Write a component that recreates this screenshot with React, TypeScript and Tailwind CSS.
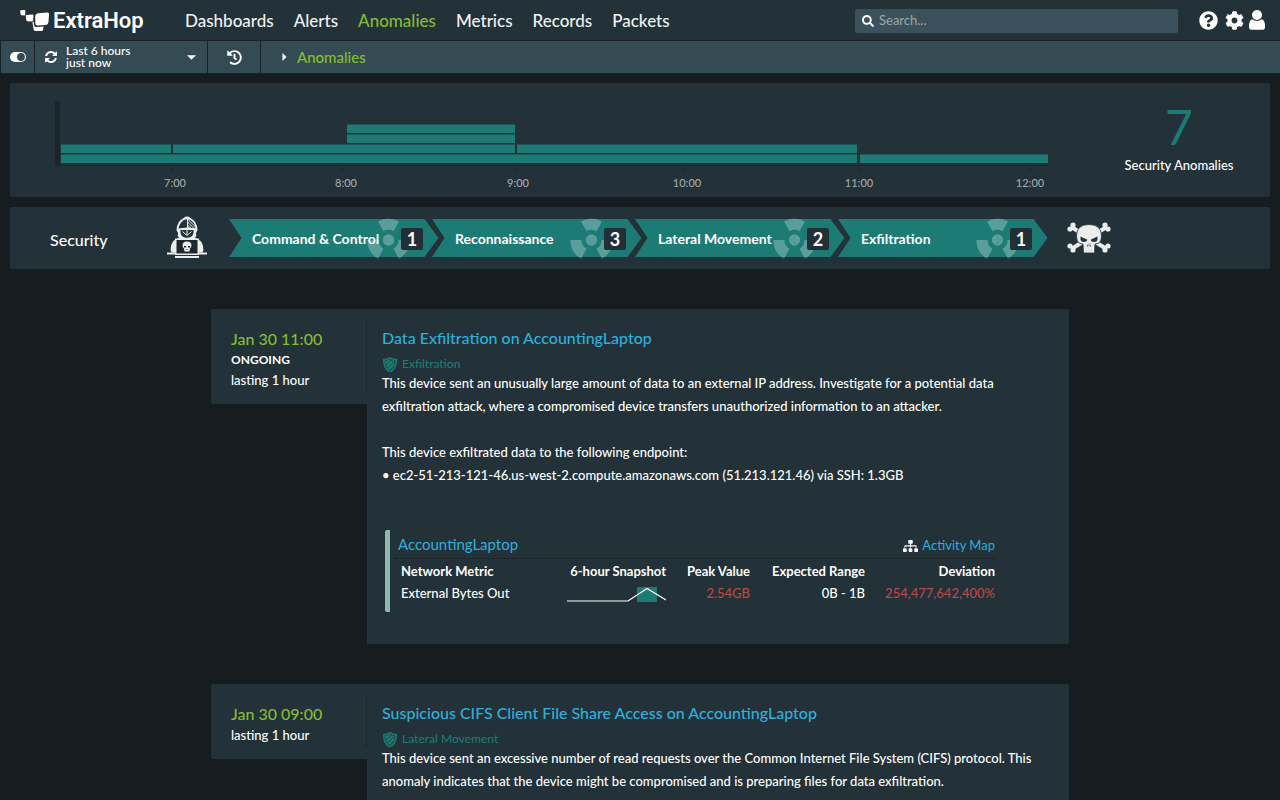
import React from 'react';
import { FaCog, FaHistory, FaQuestionCircle, FaSearch, FaSitemap } from 'react-icons/fa';

const navItems = ['Dashboards', 'Alerts', 'Anomalies', 'Metrics', 'Records', 'Packets'];

const bars = [
  { x: 337, y: 41, w: 168 },
  { x: 337, y: 51, w: 168 },
  { x: 51, y: 61, w: 110 },
  { x: 163, y: 61, w: 342 },
  { x: 507, y: 61, w: 340 },
  { x: 51, y: 71, w: 796 },
  { x: 850, y: 71, w: 188 },
];

const ticks = [
  { x: 162, label: '7:00', lx: 165 },
  { x: 332, label: '8:00', lx: 336 },
  { x: 505, label: '9:00', lx: 508 },
  { x: 675, label: '10:00', lx: 677 },
  { x: 849, label: '11:00', lx: 849 },
  { x: 1020, label: '12:00', lx: 1020 },
];

const phases = [
  { name: 'Command & Control', count: 1 },
  { name: 'Reconnaissance', count: 3 },
  { name: 'Lateral Movement', count: 2 },
  { name: 'Exfiltration', count: 1 },
];

const Logo = () => (
  <a href="/" className="flex items-center w-[165px] shrink-0 text-white">
    <svg className="w-[30px] h-6 mr-[3px]" viewBox="0 0 30 24" fill="currentColor">
      <path d="M.8 2.300 4.500 2q.8 0 .8.800L5.200 6.800q-.1.700-.8.700L1.500 7.200Q.8 7.100.7 6.400L.1 3.100q0-.7.700-.8z" />
      <path d="M6.500 7 12.500 6.600q1-.1 1 .9L13.100 12.600q-.1 1-1.100 1L7.500 13.200q-1-.1-1.100-1L5.700 8q-.1-.9.800-1z" />
      <path d="M18 5.300 27.500 4.500q1.700 0 1.600 1.500L28.400 14.500q-.4 2.300-2.600 2.500L17.300 17.400q-1.900 0-2-1.900l-.1-7.200q.2-2.700 2.800-3z" />
      <path d="M13.900 13.800v3q.2 2.200 2.400 2.200l7.300-.4-.6 3.400q-.2 1-1.300 1l-6.500-.1q-1.300-.1-1.600-1.300l-1.100-6.800q0-.9 1.400-1z" />
    </svg>
    <span className="font-['Roboto',sans-serif] font-semibold text-[22px] leading-6 pt-[2px]">ExtraHop</span>
  </a>
);

const Header = () => (
  <header className="h-10 shrink-0 flex items-center bg-[#233138] pl-5 pr-[15px]">
    <Logo />
    <nav className="flex gap-5 pt-[2px] text-[17px] leading-6 font-medium text-[#f0f3f4]">
      {navItems.map((item) => (
        <a key={item} href={'#' + item} className={item === 'Anomalies' ? 'text-[#84bc34]' : 'hover:text-white'}>
          {item}
        </a>
      ))}
    </nav>
    <label className="ml-auto mt-[2px] w-[323px] h-6 flex items-center gap-[5px] bg-[#3b525c] rounded-xs px-[7px] text-white">
      <FaSearch className="w-3 h-3" />
      <input
        type="text"
        aria-label="Search"
        placeholder="Search..."
        className="flex-1 min-w-0 bg-transparent outline-none text-[13px] placeholder-[#a0a5a6]"
      />
    </label>
    <div className="flex items-center ml-[21px] text-white">
      <button type="button" aria-label="Help" className="mr-[7px]">
        <FaQuestionCircle className="w-[19px] h-[19px]" />
      </button>
      <button type="button" aria-label="Settings" className="mr-[5px]">
        <FaCog className="w-[19px] h-[19px]" />
      </button>
      <button type="button" aria-label="Account">
        <svg className="w-4 h-5" viewBox="0 0 16 20" fill="currentColor">
          <circle cx="8" cy="5" r="5" />
          <path d="M3.300 9.300Q5.500 11 8 11t4.700-1.700Q16 10 16 16.500q0 3.300-2 3.300H2Q0 19.800 0 16.500q0-6.500 3.300-7.200z" />
        </svg>
      </button>
    </div>
  </header>
);

const Toolbar = () => (
  <div className="h-[34px] shrink-0 flex border-y border-[#182225] bg-[#354b53] text-white">
    <button type="button" aria-label="Toggle panel" className="w-[35px] flex items-center justify-center border-x border-[#182225]">
      <svg className="w-4 h-[10px]" viewBox="0 0 16 10">
        <rect width="16" height="10" rx="5" fill="currentColor" />
        <circle cx="11" cy="5" r="3.900" fill="#354b53" />
      </svg>
    </button>
    <button type="button" className="w-[173px] flex items-center pl-[10px] pr-[11px] border-r border-[#182225] text-left">
      <svg className="w-3 h-3" viewBox="0 0 1536 1536" fill="currentColor">
        <path d="M1511 928q0 5-1 7-64 268-268 434.500T764 1536q-146 0-282.500-55T238 1324l-129 129q-19 19-45 19t-45-19-19-45V960q0-26 19-45t45-19h448q26 0 45 19t19 45-19 45l-137 137q71 66 161 102t187 36q134 0 250-65t186-179q11-17 53-117 8-23 30-23h192q13 0 22.500 9.500t9.500 22.500zm25-800v448q0 26-19 45t-45 19h-448q-26 0-45-19t-19-45 19-45l138-138Q969 256 768 256q-134 0-250 65T332 500q-11 17-53 117-8 23-30 23H50q-13 0-22.500-9.500T18 608v-7q65-268 270-434.500T768 0q146 0 284 55.500T1297 212l130-129q19-19 45-19t45 19 19 45z" />
      </svg>
      <span className="ml-[9px] text-xs leading-3 font-medium">
        Last 6 hours
        <br />
        just now
      </span>
      <svg className="w-[9px] h-[5px] ml-auto" viewBox="0 0 8 4" fill="currentColor">
        <path d="M0 0h8L4 4z" />
      </svg>
    </button>
    <button type="button" aria-label="History" className="w-[53px] flex items-center justify-center border-r border-[#182225]">
      <FaHistory className="w-[15px] h-[15px]" />
    </button>
    <div className="flex items-center pl-[21px]">
      <svg className="w-[5px] h-2" viewBox="0 0 4 8" fill="currentColor">
        <path d="M0 0v8l4-4z" />
      </svg>
      <a href="#Anomalies" className="ml-[10px] text-[15px] font-medium text-[#84bc34]">Anomalies</a>
    </div>
  </div>
);

const Timeline = () => (
  <section className="flex bg-[#233138] rounded-xs">
    <svg className="flex-1 min-w-0" viewBox="0 0 1078 114">
      <rect x="45" y="18" width="5" height="64" fill="#1b262a" />
      <rect x="45" y="82" width="993" height="1" fill="#1b262a" />
      {bars.map((b) => (
        <rect key={b.x + '-' + b.y} x={b.x} y={b.y + 0.5} width={b.w} height="8.500" fill="#1d7b76" />
      ))}
      {ticks.map((t) => (
        <g key={t.label}>
          <rect x={t.x - 0.5} y="84" width="1" height="4" fill="#1b262a" />
          <text x={t.lx} y="104" textAnchor="middle" fill="#a3a8aa" className="text-[11px] font-medium">
            {t.label}
          </text>
        </g>
      ))}
    </svg>
    <div className="w-[182px] flex flex-col items-center pt-5">
      <span className="text-5xl leading-[48px] text-[#1d7b76]">7</span>
      <span className="mt-1 text-[13px] leading-5 font-medium text-white">Security Anomalies</span>
    </div>
  </section>
);

const Hacker = () => (
  <svg className="w-10 h-[44px] shrink-0" viewBox="0 0 40 44">
    <path
      d="M20 .5q2 0 3 1.200 7 3 7.500 12.300l-1.500 3q1 3-1 5 7 2 8 8 1 4-.5 6.500H4.500Q3 34 4 30q1-6 8-8-2-2-1-5l-1.500-3Q10 4.700 17 1.700 18 .5 20 .5z"
      fill="#eceeee"
    />
    <path d="M20 3q-7 1.500-8.500 9.500L20 11.500z" fill="#233138" />
    <path d="M21 3q6.500 1.500 7.500 9.500l-7.500-1z" fill="#8b9396" />
    <path d="M21 5l7 7M21 8l4 4M23 4l4.500 4.500" stroke="#233138" strokeWidth=".9" />
    <path d="M13.500 14h13q.5 4-2 6.500-4.500 2.500-9 0-2.500-2.500-2-6.500z" fill="#233138" />
    <path d="M15.500 15.500l4.500 4 4.500-4M20 14v5" stroke="#eceeee" strokeWidth="1" fill="none" />
    <path d="M8 22.500h24V39H8z" fill="#eceeee" />
    <path d="M9.500 24h21v13.500h-21z" fill="#1d292e" />
    <path d="M15.500 29.500q0-4 4.500-4t4.500 4q0 2-1.500 3l-.5 3h-5l-.5-3q-1.500-1-1.500-3z" fill="#eceeee" />
    <path d="M17 30h2.200v1.500H17zM21 30h2.200v1.500H21zM19.500 33h1v1h-1z" fill="#1a2529" />
    <path d="M0 36.500h8v2H0zM32 36.500h8v2h-8zM8 40h24v2H8z" fill="#eceeee" />
  </svg>
);

const Skull = () => (
  <svg className="w-11 h-8 shrink-0" viewBox="0 0 44 32">
    <g stroke="#eceeee" strokeWidth="4" strokeLinecap="round" fill="#eceeee">
      <path d="M6 6l32 20M38 6L6 26" />
      <g stroke="none">
        <circle cx="6" cy="3" r="2.600" />
        <circle cx="3" cy="7" r="2.600" />
        <circle cx="38" cy="3" r="2.600" />
        <circle cx="41" cy="7" r="2.600" />
        <circle cx="3" cy="24" r="2.600" />
        <circle cx="6" cy="28" r="2.600" />
        <circle cx="41" cy="24" r="2.600" />
        <circle cx="38" cy="28" r="2.600" />
      </g>
    </g>
    <path
      d="M22 2.500q12.500 0 12.500 11.500 0 5-2.500 7-2 .8-4 1L27.500 31h-11L16 22q-2-.2-4-1-2.500-2-2.500-7Q9.500 2.500 22 2.500z"
      fill="#eceeee"
      stroke="#233138"
      strokeWidth=".8"
    />
    <path d="M13.500 14.500l7 3.200q-1 2.300-3.500 2.300-3 0-3.500-2.300zM30.500 14.500l-7 3.200q1 2.300 3.500 2.300 3 0 3.500-2.300z" fill="#233138" />
    <path d="M21.300 21l-1.300 3.500h1.300zM22.700 21l1.300 3.500h-1.300z" fill="#233138" />
    <path d="M19.500 27.500v2.500M22 27.500v2.500M24.500 27.500v2.500" stroke="#c5cacb" strokeWidth=".6" />
  </svg>
);

const Phase = ({ name, count }: { name: string; count: number }) => (
  <li className="relative w-[210px] h-[38px] -mr-[7px] flex items-center pl-[23px] pr-4 pt-[2px]">
    <svg className="absolute inset-0 overflow-visible" width="210" height="38" viewBox="0 0 210 38">
      <path d="M0 0h195.500l14 19-14 19H0l12.500-19z" fill="#1d7b76" />
      <g fill="#fff" fillOpacity=".27">
        <circle cx="159.500" cy="21" r="5.700" />
        <path d="M149 2.500a21 21 0 0 1 21 0L164.500 12.300a10 10 0 0 0-10 0z" />
        <path d="M180.500 21a21 21 0 0 1-10.500 18.700L164.500 29.700a10 10 0 0 0 5-8.700z" />
        <path d="M149 39.700A21 21 0 0 1 138.500 21h11a10 10 0 0 0 5 8.700z" />
      </g>
    </svg>
    <a href={'#' + name} className="relative flex-1 text-sm font-bold text-white whitespace-nowrap">{name}</a>
    <span className="relative w-[22px] h-[22px] rounded-xs bg-[#232f36] text-center text-lg leading-[22px] font-bold text-white">
      {count}
    </span>
  </li>
);

const KillChain = () => (
  <section className="flex items-center h-[62px] bg-[#233138] rounded-xs pl-10">
    <h2 className="w-[117px] pt-1 text-base font-medium text-white">Security</h2>
    <Hacker />
    <ul className="flex ml-[22px]">
      {phases.map((p) => (
        <Phase key={p.name} name={p.name} count={p.count} />
      ))}
    </ul>
    <div className="ml-[26px]">
      <Skull />
    </div>
  </section>
);

const Shield = () => (
  <svg className="w-4 h-4 shrink-0" viewBox="-1 -1 16 16">
    <path d="M7 0q3 2 7 2 .5 10-7 14Q-.5 12 0 2q4 0 7-2z" fill="#1d7b76" />
    <path d="M7 2q2 1.500 5 1.700Q12 11 7 14 2 11 2 3.700 5 3.500 7 2z" fill="none" stroke="#233138" strokeWidth=".6" />
    <path d="M3 8l6-5M4 11l7.500-6.500M6.500 13l4.500-4" stroke="#233138" strokeWidth=".7" />
  </svg>
);

type AnomalyProps = {
  date: string;
  ongoing?: boolean;
  title: string;
  category: string;
  children: React.ReactNode;
};

const Anomaly = ({ date, ongoing, title, category, children }: AnomalyProps) => (
  <article className="flex items-start w-full max-w-[858px] mx-auto mb-10 text-white">
    <div className="w-[156px] shrink-0 bg-[#233138] rounded-l-xs py-[10px]">
      <div className="border-r border-dotted border-[#151d20] pl-5 pt-[9px] pb-1 text-[13px] leading-5 font-medium">
        <p className="text-base leading-[22px] text-[#84bc34]">{date}</p>
        {ongoing && <p className="text-xs leading-5 font-bold">ONGOING</p>}
        <p>lasting 1 hour</p>
      </div>
    </div>
    <div className="flex-1 min-w-0 bg-[#233138] rounded-r-xs pl-[15px] pr-8 pt-[17px] pb-8">
      <h3 className="text-base leading-[24px] font-medium">
        <a href="#anomaly" className="text-[#2eb0dc]">{title}</a>
      </h3>
      <p className="flex items-center gap-1 mt-[6px] text-xs leading-4 font-medium text-[#1d7b76]">
        <Shield />
        {category}
      </p>
      {children}
    </div>
  </article>
);

const DeviceMetrics = () => (
  <div className="mt-[43px] ml-[3px] mr-[42px] border-l-[5px] border-[#8fb9ad] rounded-xs pl-[5px] h-[82px]">
    <div className="flex items-center justify-between h-[29px] pl-[3px] border-b border-dotted border-[#151d20]">
      <a href="#device" className="text-[15px] text-[#2eb0dc]">AccountingLaptop</a>
      <a href="#map" className="flex items-center gap-1 pt-[3px] text-[13px] text-[#2eb0dc]">
        <FaSitemap className="w-[15px] h-3 text-white" />
        Activity Map
      </a>
    </div>
    <table className="w-full mt-[1px] text-[13px] leading-[22px] text-right">
      <thead>
        <tr>
          <th className="text-left pl-[6px]">Network Metric</th>
          <th className="w-[110px]">6-hour Snapshot</th>
          <th className="w-[84px]">Peak Value</th>
          <th className="w-[115px]">Expected Range</th>
          <th className="w-[130px]">Deviation</th>
        </tr>
      </thead>
      <tbody className="font-medium">
        <tr>
          <td className="text-left pl-[6px]">External Bytes Out</td>
          <td>
            <svg className="inline-block w-[100px] h-4" viewBox="0 0 100 16" fill="none">
              <rect x="71" y="0" width="20" height="15" fill="#1d7b76" />
              <path d="M1 14h61L81 1.500 100 13" stroke="#fff" strokeWidth="1.200" />
            </svg>
          </td>
          <td className="text-[#b94a48]">2.54GB</td>
          <td>0B - 1B</td>
          <td className="text-[#b94a48]">254,477,642,400%</td>
        </tr>
      </tbody>
    </table>
  </div>
);

const App = () => {
  return (
    <div className="h-screen flex flex-col bg-[#151d20] font-['Lato',sans-serif]">
      <Header />
      <Toolbar />
      <main className="flex-1 overflow-y-auto [scrollbar-width:none]">
        <div className="flex flex-col gap-[10px] px-[10px] pt-[9px] mb-10">
          <Timeline />
          <KillChain />
        </div>

        <Anomaly date="Jan 30 11:00" ongoing title="Data Exfiltration on AccountingLaptop" category="Exfiltration">
          <div className="text-[13px] leading-[23px] font-medium">
            <p>
              This device sent an unusually large amount of data to an external IP address. Investigate for a potential data
              exfiltration attack, where a compromised device transfers unauthorized information to an attacker.
            </p>
            <p className="mt-[23px]">This device exfiltrated data to the following endpoint:</p>
            <p>• ec2-51-213-121-46.us-west-2.compute.amazonaws.com (51.213.121.46) via SSH: 1.3GB</p>
          </div>
          <DeviceMetrics />
        </Anomaly>

        <Anomaly date="Jan 30 09:00" title="Suspicious CIFS Client File Share Access on AccountingLaptop" category="Lateral Movement">
          <p className="text-[13px] leading-[23px] font-medium">
            This device sent an excessive number of read requests over the Common Internet File System (CIFS) protocol. This
            anomaly indicates that the device might be compromised and is preparing files for data exfiltration.
          </p>
        </Anomaly>
      </main>
    </div>
  );
};

export default App;
